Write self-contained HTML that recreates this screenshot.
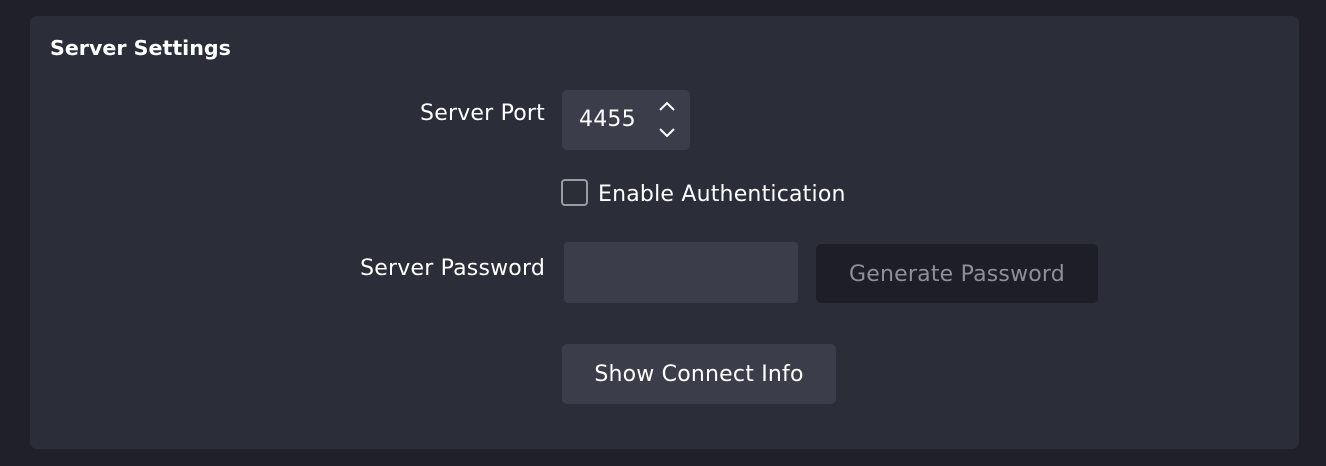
<!DOCTYPE html>
<html><head><style>
body{margin:0;width:1326px;height:466px;background:#1f2029;font-family:"DejaVu Sans",sans-serif;color:#fff;position:relative;overflow:hidden}
.panel{position:absolute;left:30px;top:16px;width:1269px;height:433px;background:#2b2d39;border-radius:7px}
.a{position:absolute;letter-spacing:0.2px}
.lbl{font-size:22px;text-align:right;right:781px}
</style></head><body>
<div class="panel"></div>
<div class="a" style="left:50px;top:36px;font-size:20.6px;font-weight:bold;letter-spacing:0">Server Settings</div>
<div class="a lbl" style="top:101px">Server Port</div>
<div class="a" style="left:562px;top:90px;width:128px;height:60px;background:#3b3e4a;border-radius:5px"></div>
<div class="a" style="left:579px;top:107px;font-size:22px">4455</div>
<svg class="a" style="left:656px;top:98px" width="22" height="44" viewBox="0 0 22 44"><path d="M4 12 L11 5 L18 12 M4 31 L11 38 L18 31" stroke="#fff" stroke-width="2" fill="none"/></svg>
<div class="a" style="left:561px;top:179px;width:27px;height:27px;border:2px solid #9a9ca4;border-radius:4px;box-sizing:border-box"></div>
<div class="a" style="left:598px;top:182px;font-size:22px">Enable Authentication</div>
<div class="a lbl" style="top:256px">Server Password</div>
<div class="a" style="left:564px;top:242px;width:234px;height:61px;background:#3b3e4a;border-radius:4px"></div>
<div class="a" style="left:816px;top:244px;width:282px;height:59px;background:#1d1e28;border-radius:5px;color:#8e9098;font-size:22px;line-height:61px;text-align:center">Generate Password</div>
<div class="a" style="left:562px;top:344px;width:274px;height:60px;background:#3b3e4a;border-radius:5px;font-size:22px;line-height:62px;text-align:center">Show Connect Info</div>
</body></html>
